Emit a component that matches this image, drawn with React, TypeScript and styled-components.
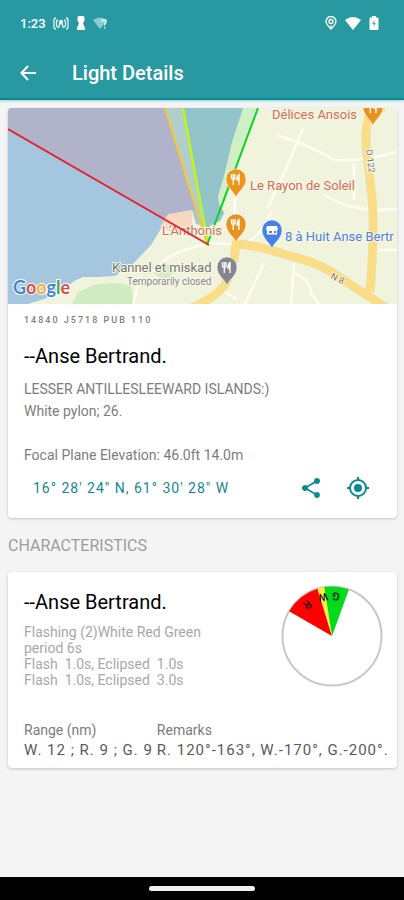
import React from "react";
import styled, { createGlobalStyle } from "styled-components";

const Global = createGlobalStyle`
  * { box-sizing: border-box; }
  body { margin: 0; background: #f4f4f4; font-family: Roboto, "Liberation Sans", sans-serif; }
  h1, h2, h3, p, dl, dd { margin: 0; }
`;

const Page = styled.div`
  min-height: 100vh;
  display: flex;
  flex-direction: column;
`;

const Header = styled.header`
  background: #2999a1;
  color: #fff;
  border-bottom: 2px solid #078b96;
  box-shadow: 0 1px 2px #9bcdd2;
`;

const StatusBar = styled.div`
  height: 46px;
  padding: 0 25px 0 20px;
  display: flex;
  align-items: center;
  justify-content: space-between;
`;

const StatusGroup = styled.div<{ $gap: number }>`
  display: flex;
  align-items: center;
  gap: ${(p) => p.$gap}px;
`;

const Clock = styled.span`
  font-size: 13px;
  font-weight: 500;
`;

const AppBar = styled.div`
  height: 52px;
  padding: 2px 16px 0;
  display: flex;
  align-items: center;
  gap: 32px;
`;

const IconButton = styled.button`
  display: grid;
  place-items: center;
  width: 24px;
  height: 24px;
  padding: 0;
  border: 0;
  background: none;
  color: inherit;
  cursor: pointer;
`;

const ScreenTitle = styled.h1`
  font-size: 20px;
  line-height: 24px;
  font-weight: 500;
`;

const Content = styled.main`
  flex: 1;
  padding: 8px 7px 8px 8px;
`;

const Card = styled.article`
  background: #fff;
  border-radius: 4px;
  overflow: hidden;
  box-shadow: 0 1px 3px rgba(0, 0, 0, 0.2);
`;

const MapView = styled.svg`
  display: block;
  width: 100%;
  height: 196px;
`;

const LightInfo = styled.div`
  padding: 8px 16px 0;
`;

const Reference = styled.p`
  font-size: 9px;
  line-height: 16px;
  font-weight: 500;
  letter-spacing: 2px;
  color: #808080;
`;

const LightName = styled.h2`
  margin: 16px 0 10px;
  font-size: 20px;
  line-height: 24px;
  font-weight: 400;
  color: #000;
`;

const Description = styled.p`
  font-size: 14px;
  line-height: 22px;
  color: #7c7c7c;
  white-space: pre-line;
`;

const Actions = styled.div`
  height: 52px;
  padding: 0 27px 8px 25px;
  display: flex;
  align-items: center;
  gap: 23px;
  color: #078b90;
`;

const Position = styled.a`
  margin-right: auto;
  font-size: 14px;
  letter-spacing: 1px;
  color: #16888d;
  text-decoration: none;
`;

const SectionTitle = styled.h2`
  margin: 18px 0 16px;
  font-size: 16px;
  line-height: 20px;
  font-weight: 400;
  color: #9c9c9c;
`;

const Characteristic = styled.div`
  padding: 2px 14px 0 16px;
  display: flex;
  justify-content: space-between;
`;

const Pattern = styled.p`
  max-width: 200px;
  font-size: 14px;
  line-height: 16px;
  color: #a8a8a8;
  white-space: pre-wrap;
`;

const Dial = styled.svg`
  width: 102px;
  height: 102px;
  margin-top: 11px;
  flex: none;
`;

const Facts = styled.dl`
  padding: 32px 8px 8px 16px;
  display: flex;
  gap: 4px;
`;

const FactLabel = styled.dt`
  font-size: 14px;
  line-height: 20px;
  color: #7c7c7c;
`;

const FactValue = styled.dd`
  font-size: 15px;
  line-height: 20px;
  letter-spacing: 1px;
  color: #5a5a5a;
  white-space: nowrap;
`;

const NavBar = styled.footer`
  height: 23px;
  background: #000;
  display: grid;
  place-items: center;
`;

const HomeHandle = styled.div`
  width: 106px;
  height: 5px;
  border-radius: 3px;
  background: #f0f0f0;
`;

const MapLabel = styled.text<{ $size?: number }>`
  font-family: Roboto, "Liberation Sans", sans-serif;
  font-size: ${(p) => p.$size ?? 13}px;
  paint-order: stroke;
  stroke: #f8f7e8;
  stroke-width: 2px;
  stroke-linejoin: round;
`;

function Pin({ x, y, color, shop }: { x: number; y: number; color: string; shop?: boolean }) {
  return (
    <g transform={`translate(${x} ${y})`}>
      <path
        d="M0 0C-1-6-10-10-10-19a10 10 0 0 1 20 0C10-10 1-6 0 0Z"
        fill={color}
        stroke="#fff"
        strokeOpacity=".6"
        strokeWidth=".8"
      />
      {shop ? (
        <path d="M-5-23H5l1 3.500-1 1v4H-5v-4l-1-1ZM-3-18v2h3v-2ZM2-18v2h2v-2Z" fill="#fff" fillRule="evenodd" />
      ) : (
        <g fill="none" stroke="#fff" strokeWidth="1.300">
          <path d="M-4.500-24v4q0 1.500 1.800 1.500T-.9-20v-4M-2.700-24v11" />
          <path d="M3-13v-10.500q-2 1.500-2 5.500h2" fill="#fff" />
        </g>
      )}
    </g>
  );
}

function LightMap() {
  return (
    <MapView viewBox="0 0 389 196" preserveAspectRatio="xMidYMid slice" role="img" aria-label="Map of Anse Bertrand">
      <rect width="389" height="196" fill="#f1f4dc" />
      <path d="M0 0H235L224 34 217 64 210 88 211 96 216 105 212 113 200 119 188 116 184 102 160 106 154 119 143 137 124 157 107 168 90 169 75 169 66 173 52 184 36 191 20 196H0Z" fill="#a5c6df" />
      <path d="M235 0H250L212 108 216 105 211 96 210 88 217 64 224 34Z" fill="#d0efc5" />
      <path d="M152 119 160 106 184 102V118L165 125Z" fill="#f4d9c0" />
      <path d="M64 196 70 184 88 176 110 175 123 178 126 196Z" fill="#cfecc0" />
      <path d="M142 162 154 151 167 163 157 174Z" fill="#d5ecc5" />
      <path d="M0 21V0H157L190 103 184 102 160 106 156 112Z" fill="#b1afc6" fillOpacity=".85" />
      <path d="M157 0H175L194 98 199 136Z" fill="#b2cecb" />
      <path d="M175 0H235L224 34 217 64 210 88 211 96 216 105 212 113 202 116 199 128Z" fill="#93c4ca" />
      <g fill="none" stroke="#fffdf2" strokeWidth="3">
        <path d="M268 27Q300 36 326 52 350 54 389 44M295 20 278 61 259 101M346 56V92M316 86Q340 105 389 101" strokeWidth="2.500" />
        <path d="M263 104Q253 130 236 135M226 136 199 135M256 155 237 196M286 155 283 196M287 166Q302 171 303 185L311 196M371 142H389M210 180 229 191M199 136Q155 145 145 164M132 168 125 196M230 80Q225 92 227 112" strokeWidth="2.500" />
      </g>
      <g fill="none" strokeLinejoin="round">
        <path d="M178 202Q210 190 219 173L226 151 228 136Q250 137 278 147 312 154 334 171 358 187 382 202" stroke="#f2dda6" strokeWidth="9" />
        <path d="M178 202Q210 190 219 173L226 151 228 136Q250 137 278 147 312 154 334 171 358 187 382 202" stroke="#fbdd84" strokeWidth="7" />
        <path d="M365-2Q354 20 360 54L364 90Q367 120 362 184" stroke="#f2dda6" strokeWidth="9" />
        <path d="M365-2Q354 20 360 54L364 90Q367 120 362 184" stroke="#fbdd84" strokeWidth="7" />
        <path d="M365 1H377" stroke="#fbdd84" strokeWidth="5" />
      </g>
      <path d="M157 0 199 136" stroke="#f8c82d" strokeWidth="2" />
      <path d="M175 0 200 136" stroke="#bdf51d" strokeWidth="2.500" />
      <path d="M250 0 199 137" stroke="#12cf28" strokeWidth="2" />
      <MapLabel x="154" y="127" fill="#ce7053">L'Anthonis</MapLabel>
      <path d="M0 21 201 137" stroke="#e32531" strokeWidth="2" />
      <MapLabel x="264" y="11" fill="#ce7053">Délices Ansois</MapLabel>
      <MapLabel x="242" y="82" fill="#ce7053">Le Rayon de Soleil</MapLabel>
      <MapLabel x="277" y="133" fill="#4c7fe0">8 à Huit Anse Bertr</MapLabel>
      <MapLabel x="104" y="164" fill="#777">Kannel et miskad</MapLabel>
      <MapLabel x="119" y="177" fill="#888" $size={10}>Temporarily closed</MapLabel>
      <MapLabel x="0" y="0" fill="#777" $size={9} transform="translate(358 42) rotate(83)">D 122</MapLabel>
      <MapLabel x="0" y="0" fill="#8a7448" $size={9} transform="translate(322 170) rotate(28)">N 8</MapLabel>
      <Pin x={228} y={90} color="#ee951d" />
      <Pin x={228} y={135} color="#e8931f" />
      <Pin x={365} y={18} color="#e8931f" />
      <Pin x={264} y={141} color="#4680e8" shop />
      <Pin x={219} y={178} color="#85868f" />
      <text x="5" y="186" fontFamily="Lato, sans-serif" fontSize="18" fontWeight="700" stroke="#fff" strokeWidth="2" paintOrder="stroke">
        <tspan fill="#4285d4">G</tspan><tspan fill="#dd4b40">o</tspan><tspan fill="#eeb32b">o</tspan><tspan fill="#4285d4">g</tspan><tspan fill="#42a55a">l</tspan><tspan fill="#dd4b40">e</tspan>
      </text>
    </MapView>
  );
}

const onDial = (bearing: number, radius: number) => {
  const a = (bearing * Math.PI) / 180;
  return [51 + radius * Math.sin(a), 51 - radius * Math.cos(a)];
};

const sectors = [
  { letter: "R", from: -60, to: -17, color: "#ff0000" },
  { letter: "W", from: -17, to: -9, color: "#ffef3a" },
  { letter: "G", from: -9, to: 20, color: "#00dc1c" },
];

function SectorDial() {
  return (
    <Dial viewBox="0 0 102 102" role="img" aria-label="Light sectors">
      <circle cx="51" cy="51" r="49.500" fill="none" stroke="#c8c8c8" strokeWidth="2" />
      {sectors.map((s) => (
        <path key={s.letter} d={`M51 51L${onDial(s.from, 49.5).join(" ")}A49.5 49.5 0 0 1 ${onDial(s.to, 49.5).join(" ")}Z`} fill={s.color} />
      ))}
      {sectors.map((s) => {
        const mid = (s.from + s.to) / 2;
        const [x, y] = onDial(mid, 40);
        return (
          <text key={s.letter} transform={`translate(${x} ${y}) rotate(${mid + 180})`} textAnchor="middle" dominantBaseline="central" fontSize="11" fontWeight="500" fontFamily="Roboto, sans-serif" fill="#111">
            {s.letter}
          </text>
        );
      })}
    </Dial>
  );
}

export default function App() {
  return (
    <Page>
      <Global />
      <Header>
        <StatusBar>
          <StatusGroup $gap={7}>
            <Clock>1:23</Clock>
            <svg width="16" height="13" viewBox="0 0 16 13" fill="none" stroke="#e4f5f5" strokeWidth="1.300">
              <path d="M3 1Q1 1 1 3.500V9.500Q1 12 3 12M13 1q2 0 2 2.500v6q0 2.500-2 2.500M5 3Q3.500 3 3.500 5v3Q3.500 10 5 10M11 3q1.500 0 1.500 2v3q0 2-1.500 2M5.500 11 7 6.500h2L10.500 11" />
              <circle cx="8" cy="5" r="1.500" fill="#e4f5f5" />
            </svg>
            <svg width="10" height="14" viewBox="0 0 10 14" fill="#fff">
              <path d="M3 0h4q1.500 0 1.500 1.500v3L7 7.500 9 12v2H1v-2L3 7.500 1.500 4.500v-3Q1.500 0 3 0Z" />
            </svg>
            <svg width="16" height="13" viewBox="0 0 16 13">
              <path d="M0 3Q7-2 14 3L7 12Z" fill="#8accd0" />
              <path d="M9 5q0-2 2-2t2 2q0 1-1.300 1.700V8.500M11.700 10v1.500" fill="none" stroke="#e4f5f5" strokeWidth="1.500" />
            </svg>
          </StatusGroup>
          <StatusGroup $gap={8}>
            <svg width="12" height="14" viewBox="0 0 12 14" fill="none" stroke="#fff" strokeWidth="1.300">
              <path d="M6 13Q1 8 1 5.500a5 5 0 0 1 10 0Q11 8 6 13Z" />
              <circle cx="6" cy="5.500" r="2" />
              <path d="M6 9.500V13" />
            </svg>
            <svg width="16" height="13" viewBox="0 0 16 13" fill="#fff">
              <path d="M0 3Q8-3 16 3L8 13Z" />
            </svg>
            <svg width="10" height="14" viewBox="0 0 10 14">
              <path d="M3 0h4v1.500h1.500q1 0 1 1v10.500q0 1-1 1h-7q-1 0-1-1V2.500q0-1 1-1H3Z" fill="#fff" />
              <path d="M5.500 4 3 8h1.700v3L7 7H5.500Z" fill="#5bafb5" />
            </svg>
          </StatusGroup>
        </StatusBar>
        <AppBar>
          <IconButton aria-label="Back">
            <svg width="24" height="24" viewBox="0 0 24 24" fill="none" stroke="#fff" strokeWidth="2">
              <path d="M20 12H6M12 5 5.500 12 12 19" />
            </svg>
          </IconButton>
          <ScreenTitle>Light Details</ScreenTitle>
        </AppBar>
      </Header>
      <Content>
        <Card>
          <LightMap />
          <LightInfo>
            <Reference>14840 J5718 PUB 110</Reference>
            <LightName>--Anse Bertrand.</LightName>
            <Description>{"LESSER ANTILLESLEEWARD ISLANDS:)\nWhite pylon; 26.\n\nFocal Plane Elevation: 46.0ft 14.0m"}</Description>
          </LightInfo>
          <Actions>
            <Position href="#position">16° 28' 24" N, 61° 30' 28" W</Position>
            <IconButton aria-label="Share">
              <svg width="24" height="24" viewBox="0 0 24 24" fill="currentColor">
                <path d="M18 16.080c-.76 0-1.440.3-1.960.77L8.910 12.700c.05-.23.09-.46.09-.7s-.04-.47-.09-.7l7.050-4.110c.54.5 1.250.81 2.040.81 1.660 0 3-1.340 3-3s-1.340-3-3-3-3 1.340-3 3c0 .24.04.47.09.7L8.040 9.810C7.500 9.310 6.790 9 6 9c-1.660 0-3 1.340-3 3s1.340 3 3 3c.79 0 1.500-.31 2.040-.81l7.120 4.160c-.05.21-.08.43-.08.65 0 1.610 1.310 2.920 2.920 2.920s2.920-1.310 2.920-2.920-1.310-2.920-2.920-2.920z" />
              </svg>
            </IconButton>
            <IconButton aria-label="Show position">
              <svg width="24" height="24" viewBox="0 0 24 24" fill="none" stroke="currentColor" strokeWidth="2">
                <circle cx="12" cy="12" r="8" />
                <circle cx="12" cy="12" r="4" fill="currentColor" stroke="none" />
                <path d="M12 1v3M12 20v3M1 12h3M20 12h3" />
              </svg>
            </IconButton>
          </Actions>
        </Card>
        <SectionTitle>CHARACTERISTICS</SectionTitle>
        <Card>
          <Characteristic>
            <div>
              <LightName>--Anse Bertrand.</LightName>
              <Pattern>{"Flashing (2)White Red Green\nperiod 6s\nFlash  1.0s, Eclipsed  1.0s\nFlash  1.0s, Eclipsed  3.0s"}</Pattern>
            </div>
            <SectorDial />
          </Characteristic>
          <Facts>
            <div>
              <FactLabel>Range (nm)</FactLabel>
              <FactValue>W. 12 ; R. 9 ; G. 9</FactValue>
            </div>
            <div>
              <FactLabel>Remarks</FactLabel>
              <FactValue>R. 120°-163°, W.-170°, G.-200°.</FactValue>
            </div>
          </Facts>
        </Card>
      </Content>
      <NavBar>
        <HomeHandle />
      </NavBar>
    </Page>
  );
}
